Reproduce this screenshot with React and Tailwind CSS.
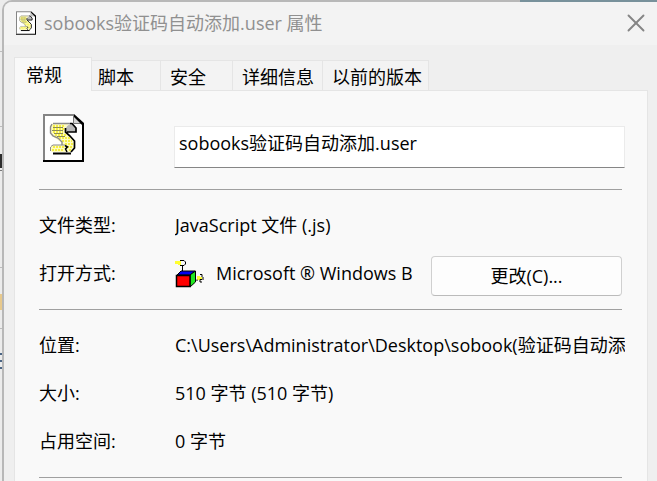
import { X } from "lucide-react";

const tabs = [
  { label: "脚本", size: "w-[69px] pl-[6px]" },
  { label: "安全", size: "w-[72px] pl-[9px]" },
  { label: "详细信息", size: "w-[90px] pl-[9px]" },
  { label: "以前的版本", size: "w-[106px] pl-[9px]" },
];

function ScriptIcon({ className }) {
  return (
    <svg viewBox="0 0 41 48" className={className} aria-hidden="true">
      <path d="M0 0H31L41 10V48H0Z" fill="#fff" />
      <path d="M0 0H31V2H2V46H0Z" fill="#858585" />
      <path d="M0 46H39V9H41V48H0Z" fill="#000" />
      <path d="M31 1L39 9H31Z" fill="#d4d4d4" />
      <path d="M30.5 1V9.5H39" fill="none" stroke="#777" />
      <path d="M31 0L41 9V11H39L31 3Z" fill="#000" />
      <path d="M10 9H27L23 13L22 18L26 21L31 27V34L28 38H9L7 36V33L9 31H19V29L9 22L7 18V12Z" fill="#fffcc0" />
      <path
        d="M10 12H22M10 15H21M10 18H20M12 21H23M16 24H27M19 27H29M22 30H30M24 33H30M26 36H29M10 33H21M9 36H21"
        stroke="#f5ef45"
        strokeWidth="2"
        strokeDasharray="2 1"
        fill="none"
      />
      <path d="M10 13.5H20M9 16.5H20M11 19.5H20M14 22.5H22" stroke="#8c8c55" fill="none" />
      <path d="M10 9.5H27M9 10L7.5 13V19L10 22L15 24L19 28V31" stroke="#8a8a8a" strokeWidth="1.4" fill="none" />
      <path d="M24 12L27 10H29L33 14V18H23V14Z" fill="#b8b8b8" />
      <path d="M27 9.5H29L33 14V18H24M22.5 14V18L27 22L31.5 27V34L28 38" stroke="#000" strokeWidth="1.7" fill="none" />
      <path d="M8 32.5L10 31H22M7.5 33V37" stroke="#8a8a8a" fill="none" />
      <path d="M22 31.5L24.5 33L22.5 35L24 38" stroke="#000" strokeWidth="1.5" fill="none" />
      <path d="M10 39.5H28" stroke="#000" strokeWidth="2" />
    </svg>
  );
}

function HostIcon() {
  return (
    <svg viewBox="0 0 29 29" className="size-[29px] shrink-0" aria-hidden="true">
      <path d="M0 2H6V6H3V5H0Z" fill="#ffff32" />
      <path d="M5 1.5H9L10.5 3V5L9 6.5H5M7.5 6.5V12" fill="none" stroke="#000" />
      <path d="M6 12H20L15 16H2Z" fill="#0000f0" stroke="#000" />
      <path d="M15 16L20.5 12V23L15 28Z" fill="#20e820" stroke="#000" />
      <path d="M1.5 16.5H15V27.5H1.5Z" fill="#f00" stroke="#000" strokeWidth="1.5" />
      <path d="M22 17H25V18H27V21H22Z" fill="#ffff32" />
      <path d="M25 15.5H27V18M28 18V21M27 20.5H25V23H27M22 20.5V22" fill="none" stroke="#000" />
    </svg>
  );
}

function Row({ label, children }) {
  return (
    <div className="flex h-12 items-center">
      <dt className="w-[136px] shrink-0">{label}</dt>
      <dd className="-mr-[3px] flex min-w-0 flex-1 items-center overflow-hidden whitespace-nowrap">
        {children}
      </dd>
    </div>
  );
}

// Sliver of the desktop that stays visible left of the dialog
function DesktopEdge() {
  return (
    <div className="flex w-[2px] shrink-0 flex-col bg-[#ececec]">
      <div className="mt-[51px] h-px bg-[#bdbdbd]" />
      <div className="mt-[74px] h-px bg-[#bdbdbd]" />
      <div className="mt-[27px] h-[14px] bg-[#2c2c2c]" />
      <div className="mt-[2px] h-px bg-[#777]" />
      <div className="mt-[96px] h-px bg-[#bdbdbd]" />
      <div className="mt-[26px] h-[16px] bg-[#e8c98c]" />
      <div className="mt-[18px] h-px bg-[#bdbdbd]" />
      <div className="mt-[24px] h-[2px] bg-[#4a6484]" />
      <div className="mt-[5px] h-[2px] bg-[#4a6484]" />
      <div className="mt-[5px] h-[2px] bg-[#4a6484]" />
    </div>
  );
}

export default function App() {
  return (
    <div className="relative flex h-screen overflow-hidden bg-[#ececec] font-['Open_Sans','Noto_Sans_CJK_SC',sans-serif] text-[18px] leading-6 text-black">
      <DesktopEdge />
      <main className="flex min-w-0 flex-1 flex-col overflow-hidden rounded-tl-[10px] border-t-2 border-l-2 border-[#b8b8b8] bg-[#efefef]">
        <header className="flex h-[43px] shrink-0 items-center bg-[#f3f3f3] pr-[6px] pb-[2px] pl-3">
          <ScriptIcon className="h-6 w-5 shrink-0" />
          <h1 className="ml-2 flex-1 truncate text-[#909090]">sobooks验证码自动添加.user 属性</h1>
          <button type="button" aria-label="关闭" className="text-[#858585]">
            <X className="size-[30px]" strokeWidth={1.5} absoluteStrokeWidth />
          </button>
        </header>

        <div className="mt-3 flex shrink-0 items-end pl-[10px]" role="tablist">
          <button
            type="button"
            role="tab"
            aria-selected="true"
            className="z-10 -mb-px h-[34px] w-[78px] border border-b-0 border-[#e5e5e5] bg-[#f9f9f9] pl-[11px] text-left"
          >
            常规
          </button>
          {tabs.map((tab) => (
            <button
              key={tab.label}
              type="button"
              role="tab"
              aria-selected="false"
              className={`h-[30px] border-t border-r border-[#e5e5e5] bg-[#f3f3f3] pt-[2px] text-left whitespace-nowrap ${tab.size}`}
            >
              {tab.label}
            </button>
          ))}
        </div>

        <section className="mr-[9px] ml-[10px] flex-1 border border-b-0 border-[#e5e5e5] bg-[#f9f9f9] pr-[25px] pl-6" role="tabpanel">
          <div className="flex pt-[23px] pb-[21px]">
            <div className="w-[135px] shrink-0 pl-1">
              <ScriptIcon className="h-12 w-[41px]" />
            </div>
            <input
              type="text"
              aria-label="文件名"
              defaultValue="sobooks验证码自动添加.user"
              className="-mr-[3px] mt-3 h-[42px] min-w-0 flex-1 border border-[#ebebeb] border-b-[#868686] bg-white pb-[10px] pl-1 outline-none"
            />
          </div>
          <hr className="border-[#a0a0a0]" />
          <dl className="pt-[11px] pb-3">
            <Row label="文件类型:">JavaScript 文件 (.js)</Row>
            <div className="flex items-center">
              <div className="min-w-0 flex-1">
                <Row label="打开方式:">
                  <HostIcon />
                  <span className="ml-3">Microsoft ® Windows B</span>
                </Row>
              </div>
              <button
                type="button"
                className="mt-[6px] ml-2 h-10 w-[191px] shrink-0 rounded-[4px] border border-[#d0d0d0] border-b-[#bbb] bg-[#fdfdfd]"
              >
                更改(C)...
              </button>
            </div>
          </dl>
          <hr className="border-[#a0a0a0]" />
          <dl className="pt-[11px] pb-3">
            <Row label="位置:">
              C:\Users\Administrator\Desktop\sobook(验证码自动添加
            </Row>
            <Row label="大小:">510 字节 (510 字节)</Row>
            <Row label="占用空间:">0 字节</Row>
          </dl>
          <hr className="border-[#a0a0a0]" />
        </section>
      </main>
      <div className="absolute top-0 right-0 h-[2px] w-[137px] bg-[#78919b]" />
    </div>
  );
}
